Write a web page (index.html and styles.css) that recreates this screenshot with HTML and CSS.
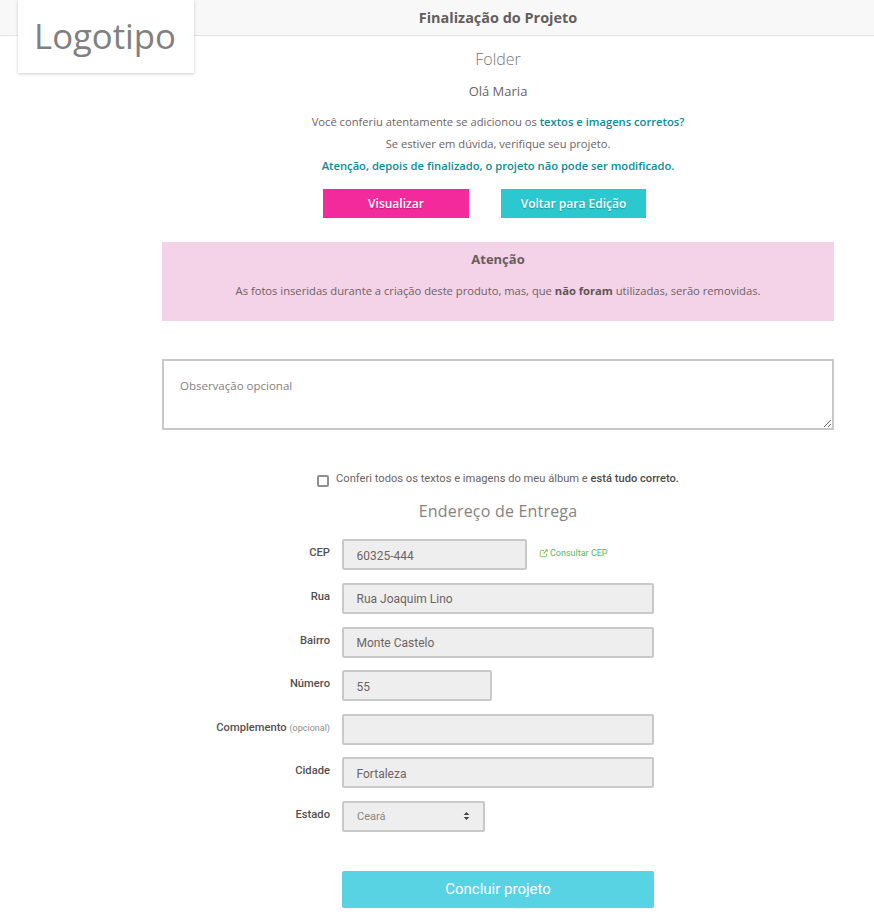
FILE: index.html
```html
<!DOCTYPE html>
<html lang="pt-BR">
<head>
<meta charset="utf-8">
<title>Finalização do Projeto</title>
<link rel="stylesheet" href="styles.css">
</head>
<body>
<header class="topbar"><h1>Finalização do Projeto</h1></header>
<div class="logo">Logotipo</div>
<main class="main">
  <h2 class="product">Folder</h2>
  <p class="hello">Olá Maria</p>
  <p class="line">Você conferiu atentamente se adicionou os <strong class="teal">textos e imagens corretos?</strong></p>
  <p class="line">Se estiver em dúvida, verifique seu projeto.</p>
  <p class="line"><strong class="teal">Atenção, depois de finalizado, o projeto não pode ser modificado.</strong></p>
  <div class="actions">
    <a class="btn btn-pink">Visualizar</a>
    <a class="btn btn-teal">Voltar para Edição</a>
  </div>
  <section class="alert">
    <h3>Atenção</h3>
    <p>As fotos inseridas durante a criação deste produto, mas, que <strong>não foram</strong> utilizadas, serão removidas.</p>
  </section>
  <textarea class="notes" placeholder="Observação opcional"></textarea>
  <label class="confirm"><input type="checkbox"><span class="box"></span><span>Conferi todos os textos e imagens do meu álbum e <strong>está tudo correto.</strong></span></label>
  <h2 class="address">Endereço de Entrega</h2>
  <form class="form">
    <div class="row"><label>CEP</label><input class="w-cep" value="60325-444"><a class="cep-link"><svg viewBox="0 0 12 12" width="10" height="10"><path d="M9 7v2.5a1 1 0 0 1-1 1H2.5a1 1 0 0 1-1-1V4a1 1 0 0 1 1-1H6" fill="none" stroke="currentColor" stroke-width="1.1"/><path d="M7.2 1.5h3.3v3.3L9.4 3.7 6 7.1 4.9 6l3.4-3.4z" fill="currentColor"/></svg>Consultar CEP</a></div>
    <div class="row"><label>Rua</label><input class="w-full" value="Rua Joaquim Lino"></div>
    <div class="row"><label>Bairro</label><input class="w-full" value="Monte Castelo"></div>
    <div class="row"><label>Número</label><input class="w-num" value="55"></div>
    <div class="row"><label>Complemento <small>(opcional)</small></label><input class="w-full"></div>
    <div class="row"><label>Cidade</label><input class="w-full" value="Fortaleza"></div>
    <div class="row"><label>Estado</label><div class="select"><span>Ceará</span><svg viewBox="0 0 8 11" width="7" height="10"><path d="M4 .8 7.2 4.4H.8zM4 10.2.8 6.6h6.4z" fill="#444"/></svg></div></div>
    <button class="submit" type="button">Concluir projeto</button>
  </form>
</main>
</body>
</html>
```
FILE: styles.css
```css
* { box-sizing: border-box; }
html, body { margin: 0; padding: 0; }
body { background: #fff; color: #6d6464; font-family: "Open Sans", sans-serif; font-size: 11px; height: 924px; overflow: hidden; position: relative; }
.topbar { height: 36px; background: #f8f8f8; border-bottom: 1px solid #e3e3e3; padding-left: 162px; width: 100%; }
.topbar h1 { margin: 0; width: 672px; text-align: center; font-size: 14.45px; line-height: 36px; font-weight: 700; color: #655e5e; }
.logo { position: absolute; left: 18px; top: 0; width: 176px; height: 73px; padding-right: 2px; background: #fff; box-shadow: 0 1px 3px rgba(0,0,0,.2); color: #808080; font-size: 34.7px; line-height: 71px; text-align: center; }
.main { margin-left: 162px; width: 672px; text-align: center; }
.product { margin: 12px 0 0; font-size: 16px; line-height: 22px; font-weight: 300; color: #77777f; }
.hello { margin: 11px 0 0; font-size: 13px; line-height: 20px; color: #6d6464; }
.line { margin: 0; font-size: 11.2px; line-height: 22px; }
.hello + .line { margin-top: 10px; }
.teal { color: #0d8c94; font-weight: 600; }
.actions { display: flex; margin: 12px 0 0 161px; gap: 32px; }
.btn { display: block; width: 146px; height: 29px; line-height: 29px; color: #fff; font-size: 12px; font-weight: 600; text-shadow: 0 1px 1px rgba(0,0,0,.25); }
.btn-pink { background: #f22a9c; }
.btn-teal { background: #2cc8cf; width: 145px; }
.alert { margin-top: 24px; height: 79px; background: #f4d2e7; padding-top: 8px; }
.alert h3 { margin: 0; font-size: 13px; line-height: 19px; font-weight: 700; color: #655e5e; }
.alert p { margin: 14px 0 0; font-size: 11.2px; line-height: 16px; }
.alert strong { font-weight: 700; color: #5d5656; }
.notes { display: block; width: 672px; height: 71px; margin-top: 38px; border: 2px solid #c9c9c9; padding: 16px; font-family: "Open Sans", sans-serif; font-size: 11.5px; line-height: 17px; color: #6d6464; background: #fff; outline: 0; }
.notes::placeholder { color: #85807f; opacity: 1; }
.confirm { display: flex; justify-content: center; align-items: flex-start; gap: 7px; margin-top: 40px; font-family: Roboto, sans-serif; font-size: 11.15px; line-height: 17px; color: #6d6464; }
.confirm input { position: absolute; opacity: 0; width: 0; height: 0; margin: 0; }
.box { width: 12px; height: 12px; border: 2px solid #8f8f8f; border-radius: 2px; margin-top: 5px; }
.confirm strong { font-weight: 500; color: #4f4a4a; }
.address { margin: 12px 0 0; font-size: 16px; line-height: 24px; font-weight: 400; color: #88827f; letter-spacing: .2px; }
.form { margin-top: 16.4px; font-family: Roboto, sans-serif; text-align: left; }
.row { display: flex; align-items: flex-start; height: 31px; margin-bottom: 12.6px; position: relative; }
.row label { flex: none; width: 168px; margin-right: 12px; text-align: right; font-size: 11.2px; font-weight: 500; line-height: 28px; color: #554f4f; }
.row small { font-size: 9px; font-weight: 400; color: #8f8a8a; }
.row input { height: 31px; border: 2px solid #c9c9c9; border-radius: 2px; background: #eee; padding: 2px 12.5px 0; font-family: Roboto, sans-serif; font-size: 12px; color: #6d6464; outline: 0; }
.w-full { width: 312px; }
.w-cep { width: 185px; }
.w-num { width: 150px; }
.cep-link { display: flex; align-items: center; gap: 1px; margin-left: 12px; margin-top: 8px; font-size: 9px; line-height: 12px; color: #4cbb6c; }
.cep-link svg { color: #8cc152; }
.select { width: 143px; height: 31px; border: 2px solid #c9c9c9; border-radius: 2px; background: #eee; display: flex; align-items: center; justify-content: space-between; padding: 0 13px; font-size: 11px; color: #8a8585; }
.submit { display: block; margin: 39px 0 0 180px; width: 312px; height: 37px; border: 0; border-radius: 2px; background: #58d3e4; color: #fff; font-family: Roboto, sans-serif; font-size: 15px; }
```
